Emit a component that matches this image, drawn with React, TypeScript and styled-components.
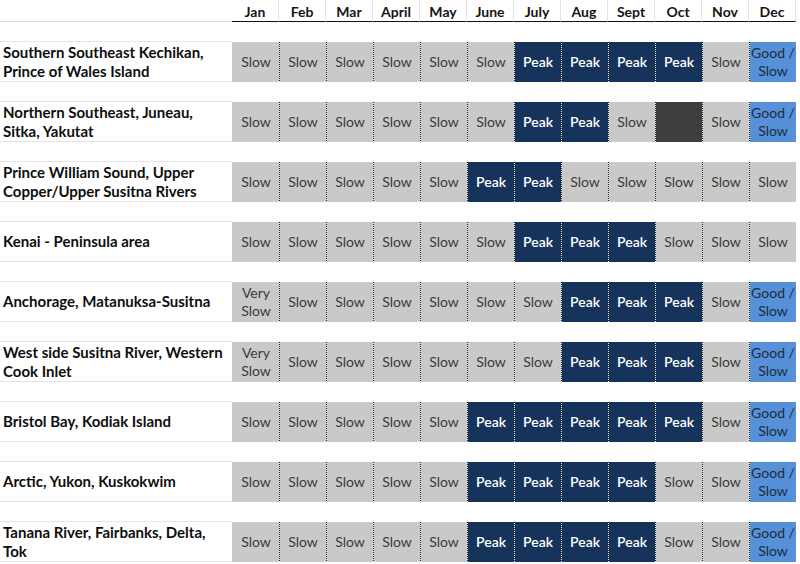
import * as React from 'react'
import styled, { createGlobalStyle } from 'styled-components'

const GlobalStyle = createGlobalStyle`
  html, body {
    margin: 0;
    padding: 0;
    background: #ffffff;
  }
  body {
    font-family: Lato, 'Noto Sans', sans-serif;
  }
`

type Level = 'slow' | 'verySlow' | 'peak' | 'good' | 'closed'

const MONTHS = ['Jan', 'Feb', 'Mar', 'April', 'May', 'June', 'July', 'Aug', 'Sept', 'Oct', 'Nov', 'Dec']

const S: Level = 'slow'
const V: Level = 'verySlow'
const P: Level = 'peak'
const G: Level = 'good'
const X: Level = 'closed'

interface Region {
  name: string
  months: Level[]
}

const REGIONS: Region[] = [
  { name: 'Southern Southeast Kechikan, Prince of Wales Island', months: [S, S, S, S, S, S, P, P, P, P, S, G] },
  { name: 'Northern Southeast, Juneau, Sitka, Yakutat', months: [S, S, S, S, S, S, P, P, S, X, S, G] },
  { name: 'Prince William Sound, Upper Copper/Upper Susitna Rivers', months: [S, S, S, S, S, P, P, S, S, S, S, S] },
  { name: 'Kenai - Peninsula area', months: [S, S, S, S, S, S, P, P, P, S, S, S] },
  { name: 'Anchorage, Matanuksa-Susitna', months: [V, S, S, S, S, S, S, P, P, P, S, G] },
  { name: 'West side Susitna River, Western Cook Inlet', months: [V, S, S, S, S, S, S, P, P, P, S, G] },
  { name: 'Bristol Bay, Kodiak Island', months: [S, S, S, S, S, P, P, P, P, P, S, G] },
  { name: 'Arctic, Yukon, Kuskokwim', months: [S, S, S, S, S, P, P, P, P, S, S, G] },
  { name: 'Tanana River, Fairbanks, Delta, Tok', months: [S, S, S, S, S, P, P, P, P, S, S, G] }
]

// line breaks kept as in the source table
const LABELS: Record<Level, string> = {
  slow: 'Slow',
  verySlow: 'Very\nSlow',
  peak: 'Peak',
  good: 'Good /\nSlow',
  closed: ''
}

const BACKGROUNDS: Record<Level, string> = {
  slow: '#c9c9c9',
  verySlow: '#c9c9c9',
  peak: '#16335b',
  good: '#5590d8',
  closed: '#3e3e3e'
}

const COLORS: Record<Level, string> = {
  slow: '#3b3b3b',
  verySlow: '#3b3b3b',
  peak: '#ffffff',
  good: '#1f2c3e',
  closed: '#ffffff'
}

const Table = styled.div`
  width: 796px;
  display: flex;
  flex-direction: column;
  gap: 20px;
`

const Grid = styled.div`
  display: grid;
  grid-template-columns: 232px repeat(12, 47px);
`

const HeaderRow = styled(Grid)`
  height: 22px;
`

const HeaderBlank = styled.div`
  border-bottom: 1px solid #dcdcdc;
`

const MonthHead = styled.div`
  display: flex;
  align-items: center;
  justify-content: center;
  border-right: 1px solid #e2e2e2;
  border-bottom: 1px solid #111111;
  font-size: 14px;
  font-weight: 700;
  color: #151515;
  padding-top: 1px;
`

const Row = styled(Grid)`
  height: 40px;
  grid-template-rows: 40px;
`

const RegionName = styled.div`
  display: flex;
  align-items: center;
  box-sizing: border-box;
  margin-top: -1px;
  height: 41px;
  padding: 0 2px 0 3px;
  border-top: 1px solid #e4e4e4;
  border-bottom: 1px solid #e4e4e4;
  font-size: 15px;
  font-weight: 700;
  line-height: 19px;
  color: #0e0e0e;
`

interface CellProps {
  $level: Level
  $first: boolean
}

const Cell = styled.div<CellProps>`
  display: flex;
  align-items: center;
  justify-content: center;
  text-align: center;
  white-space: pre;
  overflow: hidden;
  box-sizing: border-box;
  padding: 0 0 0 1px;
  background-color: ${p => BACKGROUNDS[p.$level]};
  background-image: ${p =>
    p.$first ? 'none' : 'repeating-linear-gradient(to bottom, #1c1c1c 0 1px, #f2f2f2 1px 2px)'};
  background-size: 1px 100%;
  background-repeat: no-repeat;
  background-position: left top;
  color: ${p => COLORS[p.$level]};
  font-size: 14px;
  line-height: 18px;
  font-weight: ${p => (p.$level === 'peak' ? 600 : 400)};
`

const App = () => (
  <>
    <GlobalStyle />
    <Table>
      <HeaderRow>
        <HeaderBlank />
        {MONTHS.map(m => (
          <MonthHead key={m}>{m}</MonthHead>
        ))}
      </HeaderRow>
      {REGIONS.map(r => (
        <Row key={r.name}>
          <RegionName>{r.name}</RegionName>
          {r.months.map((level, i) => (
            <Cell key={MONTHS[i]} $level={level} $first={i === 0}>
              {LABELS[level]}
            </Cell>
          ))}
        </Row>
      ))}
    </Table>
  </>
)

export default App
